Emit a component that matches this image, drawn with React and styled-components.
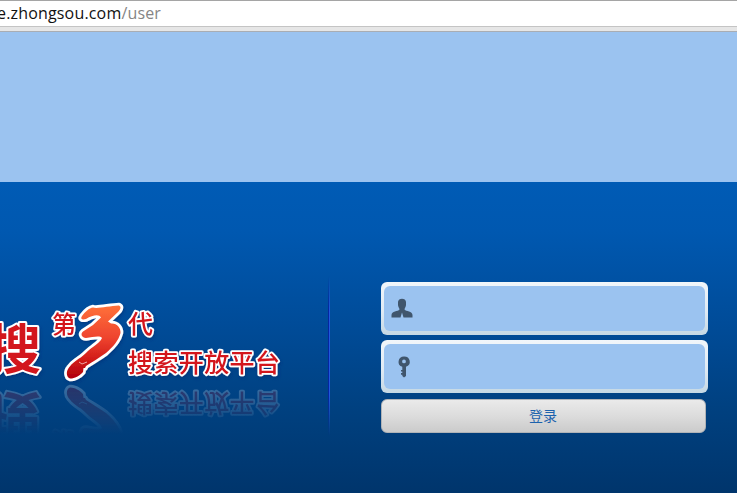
import React from "react";
import styled, { createGlobalStyle } from "styled-components";

const Global = createGlobalStyle`
  * { box-sizing: border-box; }
  body { margin: 0; overflow: hidden; font-family: "Open Sans", "Noto Sans CJK SC", sans-serif; }
`;
const Page = styled.div`
  display: flex;
  flex-direction: column;
  width: 737px;
  height: 493px;
  overflow: hidden;
  background: #9bc3f0;
`;
const AddressBar = styled.header`
  height: 32px;
  flex: none;
  border-top: 1px solid #a5a5a5;
  background: linear-gradient(#fff 0 25px, #c4c4c4 25px 26px, #e6e6e6 26px 30px, #a9adb3 30px);
  font-size: 16px;
  line-height: 25px;
  color: #111;
  white-space: nowrap;
`;
const Url = styled.span`
  display: inline-block;
  margin-left: -3px;
  letter-spacing: 0.17px;
`;
const UrlPath = styled.span`
  color: #858585;
`;
const Banner = styled.div`
  height: 150px;
  flex: none;
  background: #9bc3f0;
`;
const Main = styled.main`
  display: flex;
  align-items: flex-start;
  height: 311px;
  flex: none;
  background: linear-gradient(#005bb5 0, #0058b0 50px, #004c99 140px, #00407f 230px, #00356c 311px);
`;
const LogoArea = styled.svg`
  width: 300px;
  height: 150px;
  margin-top: 108px;
  flex: none;
  font-family: "Noto Sans CJK SC", sans-serif;
`;
const Divider = styled.div`
  width: 2px;
  height: 160px;
  margin: 94px 51px 0 28px;
  flex: none;
  background: linear-gradient(90deg, #0526a0 50%, #1f58dc 50%);
  mask-image: linear-gradient(transparent, #000 22%, #000 74%, transparent);
`;
const Form = styled.form`
  display: flex;
  flex-direction: column;
  width: 327px;
  margin-top: 100px;
`;
const Field = styled.label`
  display: flex;
  height: 53px;
  margin-bottom: 5px;
  padding: 4px 3px;
  border-radius: 6px;
  background: linear-gradient(#f1f6fa, #dfeaf4 55%, #c5d8e4);
`;
const FieldInner = styled.span`
  display: flex;
  align-items: center;
  flex: 1;
  padding: 0 0 ${(p) => p.$lift || "0"} 7px;
  border-radius: 6px;
  background: #9bc3f0;
`;
const Icon = styled.svg`
  width: 22px;
  height: 22px;
  margin-right: 5px;
  fill: #40566d;
`;
const Input = styled.input`
  flex: 1;
  min-width: 0;
  border: 0;
  outline: 0;
  background: transparent;
`;
const Submit = styled.button`
  width: 325px;
  height: 34px;
  margin-top: 1px;
  padding: 0 1px 3px 0;
  border: 1px solid #b0b3b7;
  border-radius: 6px;
  background: linear-gradient(#eaeaea, #dcdcdc 50%, #cbcbcb);
  color: #1c62ad;
  font: 14px "Noto Sans CJK SC", sans-serif;
`;

function LogoArt() {
  return (
    <g>
      <g fill="#d3131d" stroke="#fff" strokeLinejoin="round" paintOrder="stroke">
        <text x="-12" y="79" fontSize="53" fontWeight="700" strokeWidth="4">搜</text>
        <g fontWeight="500" strokeWidth="3.6">
          <text x="52" y="43" fontSize="24">第</text>
          <text x="128" y="43" fontSize="25">代</text>
          <text x="128" y="82" fontSize="25" textLength="152">搜索开放平台</text>
        </g>
      </g>
      <path
        d="M82 26C85 22 89 18 93 17.500C97 19 109 16 119 15.500C122 17 120 20 118 22L108 31.500L111 33.500C117 33 121 38 120.500 43C119 50 113 57 106 63C99 68 92 72 86 76L85 78L83.500 78L83 82C80 86 73 89 70 88.500C66 87 66 81 69 77.500C72 73 76 71 79 68.500C84 66 88 60 93 57C97 54 101 51 102 48C100 45 93 47 86 48C82 48 80 44 83 41.500L93 35L101 27.500C99 24 93 25 86 29C82 30 80 29 82 26Z"
        fill="url(#flame)"
        stroke="#fff"
        strokeWidth="5.500"
        strokeLinejoin="round"
        paintOrder="stroke"
      />
      <path d="M79 72L82 74L87 72" fill="none" stroke="#fff" strokeOpacity=".8" strokeWidth=".8" />
    </g>
  );
}

export default function App() {
  return (
    <Page>
      <Global />
      <AddressBar>
        <Url>e.zhongsou.com<UrlPath>/user</UrlPath></Url>
      </AddressBar>
      <Banner />
      <Main>
        <LogoArea viewBox="0 0 300 150">
          <defs>
            <linearGradient id="flame" x1="0" y1="0" x2="0" y2="1">
              <stop offset="0" stopColor="#ff713a" />
              <stop offset=".45" stopColor="#ee432e" />
              <stop offset=".75" stopColor="#d01a18" />
              <stop offset="1" stopColor="#b0000c" />
            </linearGradient>
            <linearGradient id="fade" x1="0" y1="92" x2="0" y2="144" gradientUnits="userSpaceOnUse">
              <stop offset="0" stopColor="#fff" stopOpacity=".25" />
              <stop offset="1" stopColor="#fff" stopOpacity="0" />
            </linearGradient>
            <mask id="reflection" maskUnits="userSpaceOnUse" x="0" y="92" width="300" height="58">
              <rect y="92" width="300" height="36" fill="url(#fade)" />
              <rect y="128" width="125" height="22" fill="url(#fade)" />
            </mask>
            <filter id="shade" x="-10%" y="-10%" width="120%" height="130%">
              <feDropShadow dx="1" dy="2" stdDeviation="1.5" floodColor="#002c70" floodOpacity=".5" />
            </filter>
            <filter id="soften">
              <feGaussianBlur stdDeviation=".5" />
            </filter>
          </defs>
          <g mask="url(#reflection)" aria-hidden="true">
            <g transform="translate(0 186) scale(1 -1)" filter="url(#soften)"><LogoArt /></g>
          </g>
          <g filter="url(#shade)"><LogoArt /></g>
        </LogoArea>
        <Divider />
        <Form onSubmit={(e) => e.preventDefault()}>
          <Field>
            <FieldInner $lift="2px">
              <Icon viewBox="0 0 22 22">
                <path d="M7 5C7 .5 15 .5 15 5V8C15 10 13.500 11 13.500 12.500C15 14.500 21.500 14 21.500 18V20.500H12.500L11 15.500L9.500 20.500H.5V18C.5 14 7 14.500 8.500 12.500C8.500 11 7 10 7 8Z" />
              </Icon>
              <Input type="text" aria-label="user" />
            </FieldInner>
          </Field>
          <Field>
            <FieldInner>
              <Icon viewBox="0 0 22 22">
                <path fillRule="evenodd" d="M13 .5A5.600 5.300 0 0 0 11.300 10.800V14H10V15.500H11.300V17H10V18.800H11.300V20L13 21.500L15 20V10.800A5.600 5.300 0 0 0 13 .5ZM13 3.500A1.900 1.900 0 1 1 13 7.300A1.900 1.900 0 0 1 13 3.500Z" />
              </Icon>
              <Input type="password" aria-label="password" />
            </FieldInner>
          </Field>
          <Submit type="submit">登录</Submit>
        </Form>
      </Main>
    </Page>
  );
}
